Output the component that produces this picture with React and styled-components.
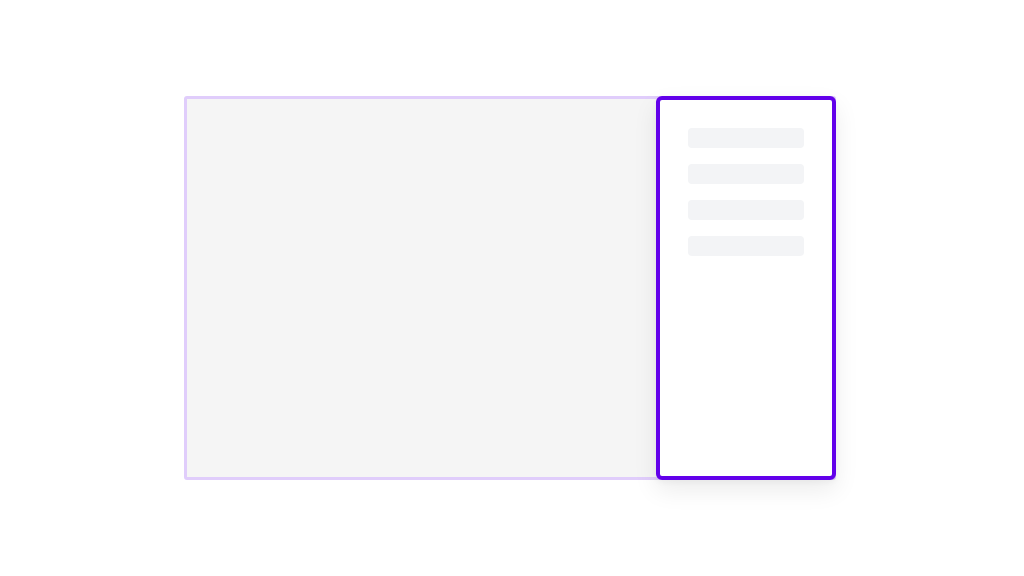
import React from "react";
import styled, { createGlobalStyle } from "styled-components";

const Global = createGlobalStyle`
  html, body { margin: 0; padding: 0; background: #ffffff; font-family: Inter, "Liberation Sans", sans-serif; }
`;

const Page = styled.div`
  width: 1024px;
  height: 576px;
  box-sizing: border-box;
  padding: 96px 0 0 184px;
`;

const Stage = styled.div`
  position: relative;
  width: 652px;
  height: 384px;
  box-sizing: border-box;
  background: #f5f5f5;
  border: 3px solid #e0cdfb;
  border-radius: 3px;
`;

const Drawer = styled.aside`
  position: absolute;
  top: -3px;
  right: -3px;
  bottom: -3px;
  width: 180px;
  box-sizing: border-box;
  background: #ffffff;
  border: 4px solid #6200ea;
  border-radius: 6px;
  padding: 28px;
  display: flex;
  flex-direction: column;
  gap: 16px;
  box-shadow: 0 10px 24px rgba(0, 0, 0, 0.08), 0 2px 6px rgba(0, 0, 0, 0.04);
`;

const Skeleton = styled.div`
  height: 20px;
  border-radius: 4px;
  background: #f3f4f6;
`;

export default function App() {
  return (
    <>
      <Global />
      <Page>
        <Stage>
          <Drawer>
            {[0, 1, 2, 3].map((i) => (
              <Skeleton key={i} />
            ))}
          </Drawer>
        </Stage>
      </Page>
    </>
  );
}
